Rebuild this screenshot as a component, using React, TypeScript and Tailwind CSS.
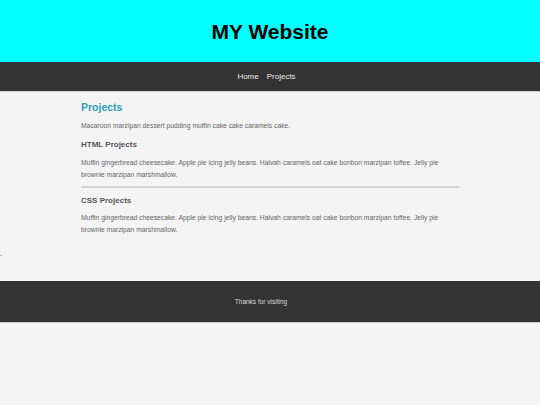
export default function App() {
  const para =
    'Muffin gingerbread cheesecake. Apple pie icing jelly beans. Halvah caramels oat cake bonbon marzipan toffee. Jelly pie brownie marzipan marshmallow.';
  return (
    <div className="min-h-[405px] bg-[#f4f4f4] font-['Liberation_Sans',Arial,sans-serif]">
      <header className="flex h-[62px] items-center justify-center bg-[#00ffff]">
        <h1 className="pt-[1px] text-[21px] font-bold leading-none text-black">MY Website</h1>
      </header>

      <nav className="flex h-[30px] items-center justify-center gap-[8px] border-b border-[#cfcfcf] bg-[#333333] pr-[7px] text-[8px] text-[#e8e8e8]">
        <a>Home</a>
        <a>Projects</a>
      </nav>

      <main className="mx-[81px] pt-[8px]">
        <h2 className="text-[10.5px] font-bold leading-[14px] text-[#2a9fbf]">Projects</h2>
        <p className="mt-[6px] text-[6.75px] leading-[12px] text-[#666]">
          Macaroon marzipan dessert pudding muffin cake cake caramels cake.
        </p>

        <h3 className="mt-[7px] text-[8px] font-bold leading-[12px] text-[#555]">HTML Projects</h3>
        <p className="mt-[6px] text-[6.75px] leading-[12px] text-[#666]">{para}</p>

        <hr className="mt-[5px] h-[2px] border-0 bg-[#d4d4d4]" />

        <h3 className="mt-[7px] text-[8px] font-bold leading-[12px] text-[#555]">CSS Projects</h3>
        <p className="mt-[5px] text-[6.75px] leading-[12px] text-[#666]">{para}</p>
      </main>

      <div className="mt-[19px] h-[1px] w-[2px] bg-[#bbbbbb]" />

      <footer className="mt-[25px] flex h-[42px] items-center justify-center border-b border-[#cfcfcf] bg-[#333333] pr-[18px] text-[6.5px] text-[#dddddd]">
        Thanks for visiting
      </footer>
    </div>
  );
}
